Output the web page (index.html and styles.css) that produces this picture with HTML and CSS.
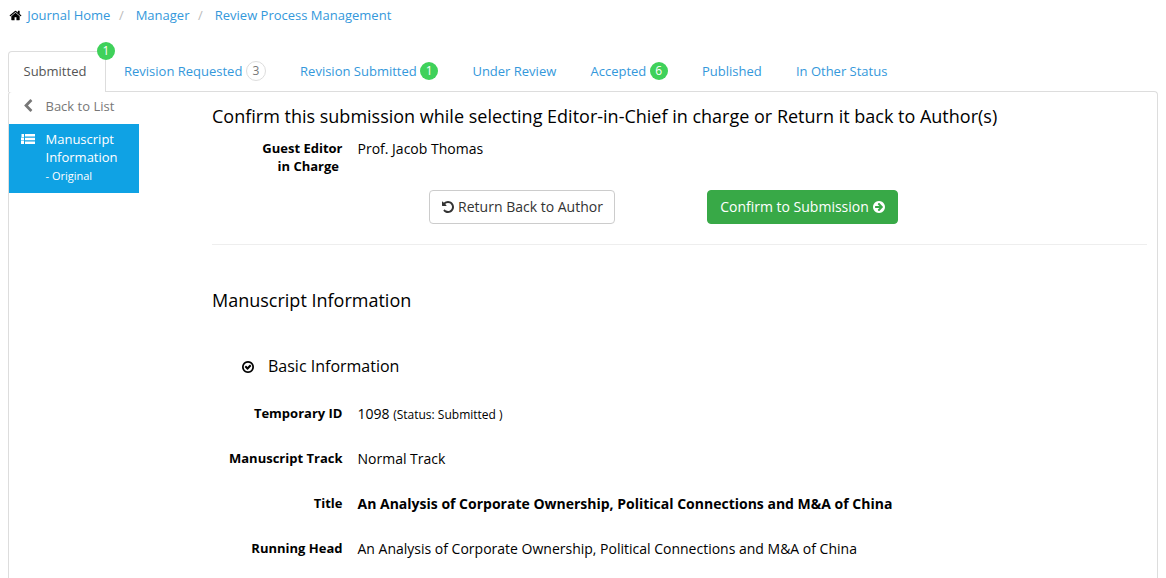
FILE: index.html
```html
<!DOCTYPE html>
<html lang="en">
<head>
<meta charset="utf-8">
<title>Review Process Management</title>
<link rel="stylesheet" href="styles.css">
</head>
<body>
<nav class="breadcrumb">
  <svg class="icon home" viewBox="0 0 1792 1792"><path d="M1472 992v480q0 26-19 45t-45 19h-384v-384h-256v384h-384q-26 0-45-19t-19-45v-480q0-1 .5-3t.5-3l575-474 575 474q1 2 1 6zm223-69l-62 74q-8 9-21 11h-3q-13 0-21-7l-692-577-692 577q-12 8-24 7-13-2-21-11l-62-74q-8-10-7-23.5t11-21.5l719-599q32-26 76-26t76 26l244 204v-195q0-14 9-23t23-9h192q14 0 23 9t9 23v408l219 182q10 8 11 21.5t-7 23.5z"/></svg>
  <a class="crumb">Journal Home</a><span class="slash">/</span><a class="crumb">Manager</a><span class="slash">/</span><a class="crumb">Review Process Management</a>
</nav>
<nav class="tabs">
  <a class="tab active">Submitted<span class="badge corner">1</span></a>
  <a class="tab requested">Revision Requested<span class="badge outline">3</span></a>
  <a class="tab">Revision Submitted<span class="badge">1</span></a>
  <a class="tab">Under Review</a>
  <a class="tab">Accepted<span class="badge">6</span></a>
  <a class="tab">Published</a>
  <a class="tab">In Other Status</a>
</nav>
<div class="panel">
  <aside class="sidebar">
    <a class="side-item back">
      <svg class="icon side-icon" viewBox="0 0 1792 1792"><path d="M1427 301l-531 531 531 531q19 19 19 45t-19 45l-166 166q-19 19-45 19t-45-19l-742-742q-19-19-19-45t19-45l742-742q19-19 45-19t45 19l166 166q19 19 19 45t-19 45z"/></svg>
      <span>Back to List</span>
    </a>
    <a class="side-item current">
      <svg class="icon side-icon list" viewBox="0 0 14 14"><path d="M.5 2H3v3H.5zM0 5.5h3v3H0zM0 9h3v3H0zM4 2h10v2.4H4zM4 5.8h10v2.4H4zM4 9.6h10V12H4z"/></svg>
      <span>Manuscript<br>Information<br><small class="version">- Original</small></span>
    </a>
  </aside>
  <main class="content">
    <h3 class="heading">Confirm this submission while selecting Editor-in-Chief in charge or Return it back to Author(s)</h3>
    <div class="row editor">
      <div class="label">Guest Editor<br><span class="second-line">in Charge</span></div>
      <div class="value">Prof. Jacob Thomas</div>
    </div>
    <div class="actions">
      <button class="btn return"><svg class="icon" viewBox="0 0 1792 1792"><path d="M1664 896q0 156-61 298t-164 245-245 164-298 61q-172 0-327-72.5t-264-204.5q-7-10-6.5-22.5t8.5-20.5l137-138q10-9 25-9 16 2 23 12 73 95 179 147t225 52q104 0 198.5-40.5t163.5-109.5 109.5-163.5 40.5-198.5-40.5-198.5-109.5-163.5-163.5-109.5-198.5-40.5q-98 0-188 35.5t-160 101.5l137 138q31 30 14 69-17 40-59 40h-448q-26 0-45-19t-19-45v-448q0-42 40-59 39-17 69 14l130 129q107-101 244.5-156.5t284.5-55.5q156 0 298 61t245 164 164 245 61 298z"/></svg><span>Return Back to Author</span></button>
      <button class="btn confirm"><span>Confirm to Submission</span><svg class="icon" viewBox="0 0 1792 1792"><path d="M1413 896q0-27-18-45l-91-91-362-362q-18-18-45-18t-45 18l-91 91q-18 18-18 45t18 45l189 189h-502q-26 0-45 19t-19 45v128q0 26 19 45t45 19h502l-189 189q-19 19-19 45t19 45l91 91q18 18 45 18t45-18l362-362 91-91q18-18 18-45zm251 0q0 209-103 385.5t-279.5 279.5-385.5 103-385.5-103-279.5-279.5-103-385.5 103-385.5 279.5-279.5 385.5-103 385.5 103 279.5 279.5 103 385.5z"/></svg></button>
    </div>
    <h3 class="heading section">Manuscript Information</h3>
    <h4 class="subheading">
      <svg class="icon" viewBox="0 0 1792 1792"><path d="M1299 813l-422 422q-19 19-45 19t-45-19l-294-294q-19-19-19-45t19-45l102-102q19-19 45-19t45 19l147 147 275-275q19-19 45-19t45 19l102 102q19 19 19 45t-19 45zm141 83q0-148-73-273t-198-198-273-73-273 73-198 198-73 273 73 273 198 198 273 73 273-73 198-198 73-273zm224 0q0 209-103 385.5t-279.5 279.5-385.5 103-385.5-103-279.5-279.5-103-385.5 103-385.5 279.5-279.5 385.5-103 385.5 103 279.5 279.5 103 385.5z"/></svg>
      <span>Basic Information</span>
    </h4>
    <div class="row"><div class="label">Temporary ID</div><div class="value">1098 <small class="status">(Status: Submitted )</small></div></div>
    <div class="row"><div class="label">Manuscript Track</div><div class="value">Normal Track</div></div>
    <div class="row"><div class="label">Title</div><div class="value strong">An Analysis of Corporate Ownership, Political Connections and M&amp;A of China</div></div>
    <div class="row"><div class="label">Running Head</div><div class="value">An Analysis of Corporate Ownership, Political Connections and M&amp;A of China</div></div>
  </main>
</div>
</body>
</html>
```
FILE: styles.css
```css
* { box-sizing: border-box; }
html, body { height: 100%; }
body {
  margin: 0;
  padding: 6px 8px 0;
  overflow: hidden;
  background: #fff;
  color: #000;
  font: 13px/18px "Open Sans", sans-serif;
  white-space: nowrap;
}
.icon { width: 14px; height: 14px; flex: none; fill: currentColor; }
.breadcrumb { display: flex; align-items: center; height: 18px; color: #000; }
.home { width: 13px; height: 13px; margin: 0 5.2px 0 1px; }
.crumb { color: #3498db; }
.slash { margin: 0 12px 0 8.5px; color: #bbb; }

.tabs { display: flex; height: 67px; padding-top: 27px; }
.tab { display: flex; align-items: center; height: 40px; margin-left: 34.2px; color: #3498db; }
.active {
  position: relative;
  width: 98px;
  height: 41px;
  margin-left: 0;
  padding: 0 0 2px 14.5px;
  border: 1px solid #ddd;
  border-bottom: 0;
  border-radius: 4px 4px 0 0;
  background: #fff;
  color: #555;
}
.requested { margin-left: 18px; }
.badge {
  width: 18px;
  height: 18px;
  margin-left: 3.5px;
  border-radius: 50%;
  background: #3fd15a;
  color: #fff;
  font-size: 12px;
  line-height: 18px;
  text-align: center;
}
.outline { width: 20px; height: 20px; border: 1px solid #ddd; background: #fff; color: #777; }
.corner { position: absolute; top: -10px; right: -10px; margin: 0; }

.panel {
  display: flex;
  width: 1150px;
  height: 487px;
  border: 1px solid #ddd;
  border-bottom: 0;
  border-radius: 4px 4px 0 0;
}
.sidebar { width: 130px; padding-top: 5px; flex: none; }
.side-item { display: flex; align-items: flex-start; }
.back { height: 27px; padding: 0 0 0 12px; color: #777; }
.side-icon { width: 14px; height: 14px; margin: 2px 10.5px 0 0; }
.current { height: 69px; padding: 6px 0 0 12px; background: #0fa2e4; color: #fff; }
.version { font-size: 11px; }

.content { width: 935px; margin-left: 73px; }
.heading { margin: 0; padding-top: 11px; font-size: 18px; font-weight: 400; line-height: 26px; }
.row { display: flex; height: 45px; line-height: 20px; }
.label { width: 130.5px; margin-right: 15px; font-weight: 700; line-height: 18px; text-align: right; }
.value { font-size: 14px; }
.editor { height: 61px; padding-top: 10px; }
.second-line { margin-right: 3.5px; }
.actions { display: flex; height: 55px; gap: 92px; padding-left: 217px; border-bottom: 1px solid #eee; }
.btn {
  display: flex;
  align-items: center;
  justify-content: center;
  gap: 3px;
  height: 34px;
  padding: 0;
  border: 1px solid #ccc;
  border-radius: 4px;
  background: #fff;
  color: #333;
  font: 14px/20px "Open Sans", sans-serif;
}
.return { width: 186px; }
.confirm { width: 191px; padding-left: 1px; border-color: #38a947; background: #38a947; color: #fff; }
.section { padding-top: 42px; }
.subheading { display: flex; align-items: center; gap: 13px; height: 24px; margin: 41px 0 26px 29px; font-size: 16px; font-weight: 400; }
.subheading .icon { margin-top: 1px; }
.status { font-size: 12px; }
.strong { font-weight: 700; }
```
